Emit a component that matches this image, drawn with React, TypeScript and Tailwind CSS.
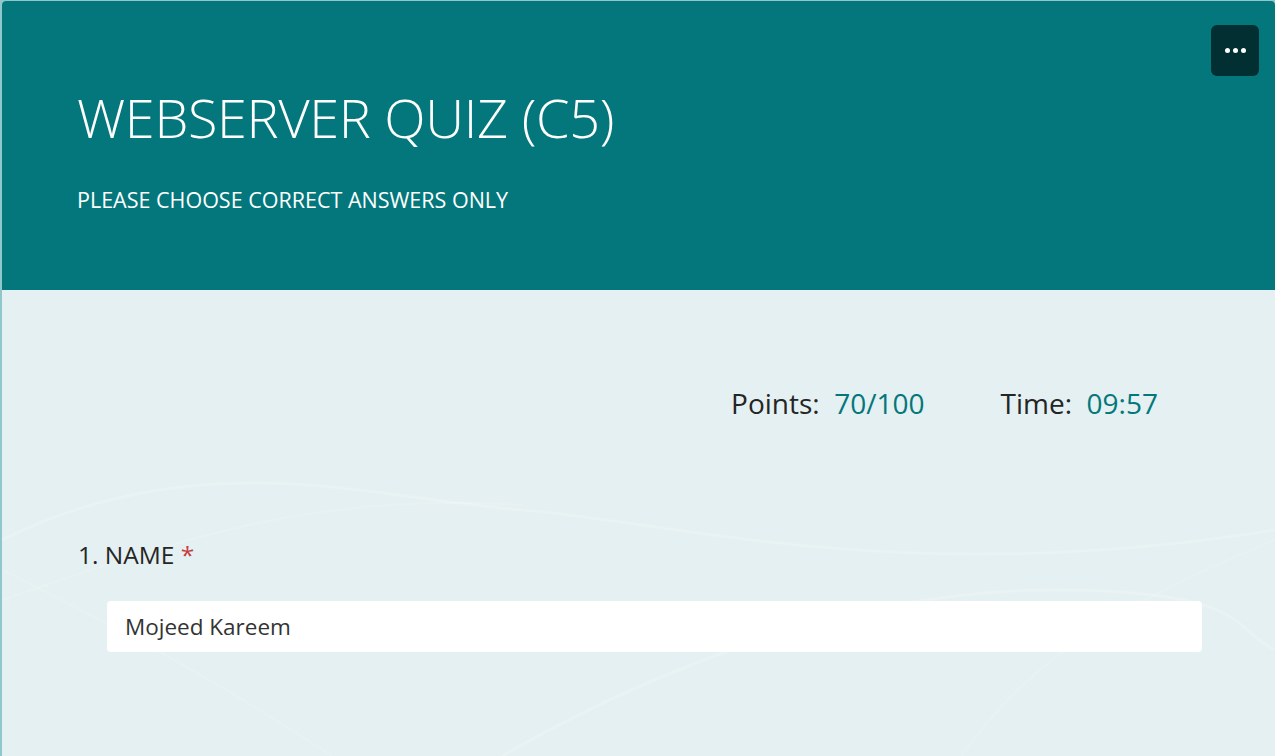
import React from 'react';

const font = { fontFamily: '"Open Sans", "Noto Sans", sans-serif' };

const Waves: React.FC = () => (
  <svg className="absolute inset-0 w-full h-full pointer-events-none" viewBox="0 0 1273 466" preserveAspectRatio="none" fill="none">
    <path d="M0 250 C 200 150, 380 210, 520 220 S 900 300, 1273 240" stroke="#ffffff" strokeOpacity="0.22" strokeWidth="3" />
    <path d="M0 310 C 150 260, 300 200, 520 215" stroke="#ffffff" strokeOpacity="0.18" strokeWidth="2" />
    <path d="M500 466 C 650 380, 850 300, 1050 300 S 1230 340, 1273 360" stroke="#ffffff" strokeOpacity="0.22" strokeWidth="3" />
    <path d="M0 280 C 80 320, 200 380, 330 466" stroke="#ffffff" strokeOpacity="0.15" strokeWidth="2" />
    <path d="M1273 250 C 1150 300, 1030 360, 960 466" stroke="#ffffff" strokeOpacity="0.15" strokeWidth="2" />
  </svg>
);

const App: React.FC = () => {
  return (
    <div className="w-[1275px] h-[756px] bg-[#8fc7ca] pl-[2px] pt-px overflow-hidden" style={font}>
      <div className="h-full flex flex-col rounded-t-[4px] overflow-hidden bg-[#e4f0f1]">
        {/* Header */}
        <header className="h-[289px] shrink-0 bg-[#03777b] relative px-[75px] pt-[80px]">
          <h1 className="text-[54px] leading-[72px] text-white font-light tracking-[-0.3px]">WEBSERVER QUIZ (C5)</h1>
          <p className="mt-[32px] text-[21.5px] leading-[30px] text-white">PLEASE CHOOSE CORRECT ANSWERS ONLY</p>
          <button className="absolute top-[24px] right-[16px] w-[48px] h-[51px] rounded-[6px] bg-[#022f31] flex items-center justify-center gap-[3px]">
            <span className="w-[5px] h-[5px] rounded-full bg-white" />
            <span className="w-[5px] h-[5px] rounded-full bg-white" />
            <span className="w-[5px] h-[5px] rounded-full bg-white" />
          </button>
        </header>

        {/* Body */}
        <main className="relative flex-1">
          <Waves />
          <div className="relative">
            <div className="flex justify-end gap-[76px] pr-[117px] pt-[93px] text-[28px] leading-[40px] text-[#252525]">
              <div>Points:&nbsp; <span className="text-[#03777b]">70/100</span></div>
              <div>Time:&nbsp; <span className="text-[#03777b]">09:57</span></div>
            </div>
            <div className="pl-[76px] pt-[116px] text-[24.5px] leading-[32px] text-[#252525]">
              1. NAME <span className="text-[#c43e3e]">*</span>
            </div>
            <div className="ml-[105px] mr-[73px] mt-[30px] h-[51px] bg-white rounded-[4px] flex items-center px-[18px] text-[22.5px] text-[#333333]">
              Mojeed Kareem
            </div>
          </div>
        </main>
      </div>
    </div>
  );
};

export default App;
